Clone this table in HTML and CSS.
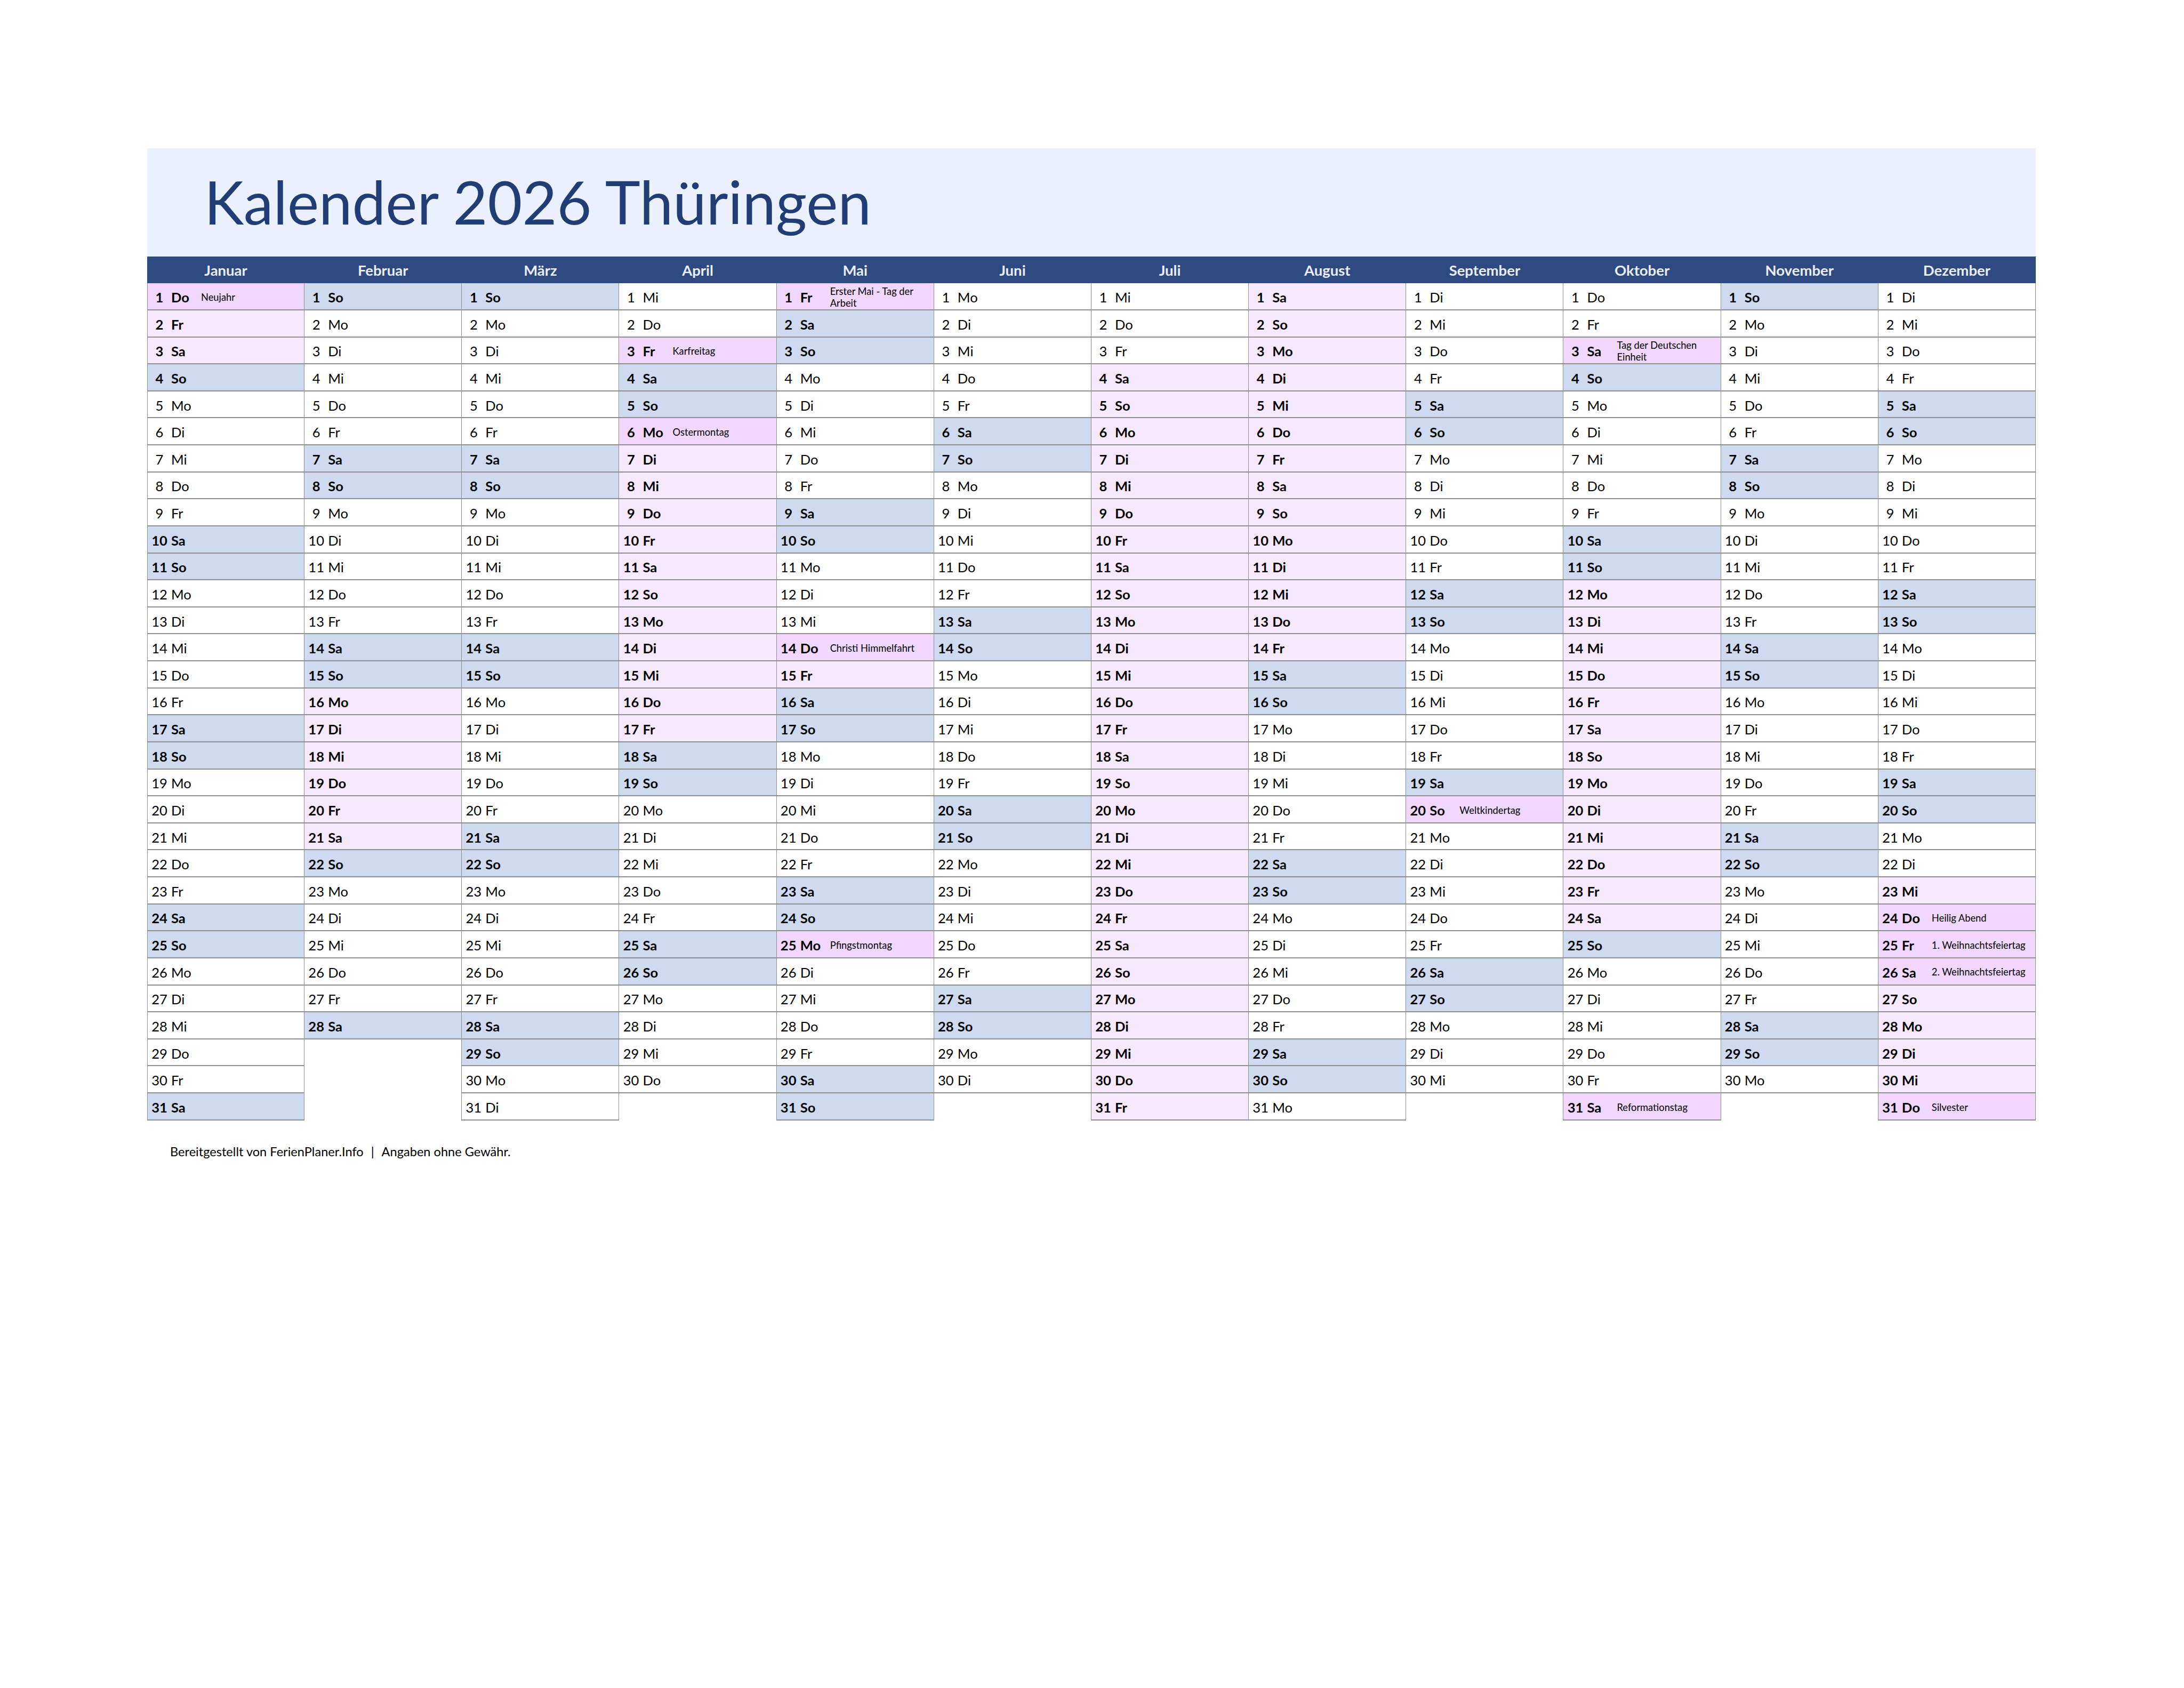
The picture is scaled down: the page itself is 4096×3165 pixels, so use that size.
FILE: index.html
```html
<!DOCTYPE html>
<html lang="de">
<head>
<meta charset="utf-8">
<title>Kalender 2026 Thüringen</title>
<link rel="stylesheet" href="styles.css">
</head>
<body>
<main class="page">
<header class="banner"><h1 class="title">Kalender 2026 Thüringen</h1></header>
<section class="cal">
<div class="month">
<div class="mh">Januar</div>
<div class="c ho"><span class="n">1</span><span class="w">Do</span><span class="h">Neujahr</span></div>
<div class="c fe"><span class="n">2</span><span class="w">Fr</span></div>
<div class="c fe"><span class="n">3</span><span class="w">Sa</span></div>
<div class="c we"><span class="n">4</span><span class="w">So</span></div>
<div class="c"><span class="n">5</span><span class="w">Mo</span></div>
<div class="c"><span class="n">6</span><span class="w">Di</span></div>
<div class="c"><span class="n">7</span><span class="w">Mi</span></div>
<div class="c"><span class="n">8</span><span class="w">Do</span></div>
<div class="c"><span class="n">9</span><span class="w">Fr</span></div>
<div class="c we"><span class="n">10</span><span class="w">Sa</span></div>
<div class="c we"><span class="n">11</span><span class="w">So</span></div>
<div class="c"><span class="n">12</span><span class="w">Mo</span></div>
<div class="c"><span class="n">13</span><span class="w">Di</span></div>
<div class="c"><span class="n">14</span><span class="w">Mi</span></div>
<div class="c"><span class="n">15</span><span class="w">Do</span></div>
<div class="c"><span class="n">16</span><span class="w">Fr</span></div>
<div class="c we"><span class="n">17</span><span class="w">Sa</span></div>
<div class="c we"><span class="n">18</span><span class="w">So</span></div>
<div class="c"><span class="n">19</span><span class="w">Mo</span></div>
<div class="c"><span class="n">20</span><span class="w">Di</span></div>
<div class="c"><span class="n">21</span><span class="w">Mi</span></div>
<div class="c"><span class="n">22</span><span class="w">Do</span></div>
<div class="c"><span class="n">23</span><span class="w">Fr</span></div>
<div class="c we"><span class="n">24</span><span class="w">Sa</span></div>
<div class="c we"><span class="n">25</span><span class="w">So</span></div>
<div class="c"><span class="n">26</span><span class="w">Mo</span></div>
<div class="c"><span class="n">27</span><span class="w">Di</span></div>
<div class="c"><span class="n">28</span><span class="w">Mi</span></div>
<div class="c"><span class="n">29</span><span class="w">Do</span></div>
<div class="c"><span class="n">30</span><span class="w">Fr</span></div>
<div class="c we"><span class="n">31</span><span class="w">Sa</span></div>
</div>
<div class="month">
<div class="mh">Februar</div>
<div class="c we"><span class="n">1</span><span class="w">So</span></div>
<div class="c"><span class="n">2</span><span class="w">Mo</span></div>
<div class="c"><span class="n">3</span><span class="w">Di</span></div>
<div class="c"><span class="n">4</span><span class="w">Mi</span></div>
<div class="c"><span class="n">5</span><span class="w">Do</span></div>
<div class="c"><span class="n">6</span><span class="w">Fr</span></div>
<div class="c we"><span class="n">7</span><span class="w">Sa</span></div>
<div class="c we"><span class="n">8</span><span class="w">So</span></div>
<div class="c"><span class="n">9</span><span class="w">Mo</span></div>
<div class="c"><span class="n">10</span><span class="w">Di</span></div>
<div class="c"><span class="n">11</span><span class="w">Mi</span></div>
<div class="c"><span class="n">12</span><span class="w">Do</span></div>
<div class="c"><span class="n">13</span><span class="w">Fr</span></div>
<div class="c we"><span class="n">14</span><span class="w">Sa</span></div>
<div class="c we"><span class="n">15</span><span class="w">So</span></div>
<div class="c fe"><span class="n">16</span><span class="w">Mo</span></div>
<div class="c fe"><span class="n">17</span><span class="w">Di</span></div>
<div class="c fe"><span class="n">18</span><span class="w">Mi</span></div>
<div class="c fe"><span class="n">19</span><span class="w">Do</span></div>
<div class="c fe"><span class="n">20</span><span class="w">Fr</span></div>
<div class="c fe"><span class="n">21</span><span class="w">Sa</span></div>
<div class="c we"><span class="n">22</span><span class="w">So</span></div>
<div class="c"><span class="n">23</span><span class="w">Mo</span></div>
<div class="c"><span class="n">24</span><span class="w">Di</span></div>
<div class="c"><span class="n">25</span><span class="w">Mi</span></div>
<div class="c"><span class="n">26</span><span class="w">Do</span></div>
<div class="c"><span class="n">27</span><span class="w">Fr</span></div>
<div class="c we"><span class="n">28</span><span class="w">Sa</span></div>
<div class="c e"></div>
<div class="c e"></div>
<div class="c e"></div>
</div>
<div class="month">
<div class="mh">März</div>
<div class="c we"><span class="n">1</span><span class="w">So</span></div>
<div class="c"><span class="n">2</span><span class="w">Mo</span></div>
<div class="c"><span class="n">3</span><span class="w">Di</span></div>
<div class="c"><span class="n">4</span><span class="w">Mi</span></div>
<div class="c"><span class="n">5</span><span class="w">Do</span></div>
<div class="c"><span class="n">6</span><span class="w">Fr</span></div>
<div class="c we"><span class="n">7</span><span class="w">Sa</span></div>
<div class="c we"><span class="n">8</span><span class="w">So</span></div>
<div class="c"><span class="n">9</span><span class="w">Mo</span></div>
<div class="c"><span class="n">10</span><span class="w">Di</span></div>
<div class="c"><span class="n">11</span><span class="w">Mi</span></div>
<div class="c"><span class="n">12</span><span class="w">Do</span></div>
<div class="c"><span class="n">13</span><span class="w">Fr</span></div>
<div class="c we"><span class="n">14</span><span class="w">Sa</span></div>
<div class="c we"><span class="n">15</span><span class="w">So</span></div>
<div class="c"><span class="n">16</span><span class="w">Mo</span></div>
<div class="c"><span class="n">17</span><span class="w">Di</span></div>
<div class="c"><span class="n">18</span><span class="w">Mi</span></div>
<div class="c"><span class="n">19</span><span class="w">Do</span></div>
<div class="c"><span class="n">20</span><span class="w">Fr</span></div>
<div class="c we"><span class="n">21</span><span class="w">Sa</span></div>
<div class="c we"><span class="n">22</span><span class="w">So</span></div>
<div class="c"><span class="n">23</span><span class="w">Mo</span></div>
<div class="c"><span class="n">24</span><span class="w">Di</span></div>
<div class="c"><span class="n">25</span><span class="w">Mi</span></div>
<div class="c"><span class="n">26</span><span class="w">Do</span></div>
<div class="c"><span class="n">27</span><span class="w">Fr</span></div>
<div class="c we"><span class="n">28</span><span class="w">Sa</span></div>
<div class="c we"><span class="n">29</span><span class="w">So</span></div>
<div class="c"><span class="n">30</span><span class="w">Mo</span></div>
<div class="c"><span class="n">31</span><span class="w">Di</span></div>
</div>
<div class="month">
<div class="mh">April</div>
<div class="c"><span class="n">1</span><span class="w">Mi</span></div>
<div class="c"><span class="n">2</span><span class="w">Do</span></div>
<div class="c ho"><span class="n">3</span><span class="w">Fr</span><span class="h">Karfreitag</span></div>
<div class="c we"><span class="n">4</span><span class="w">Sa</span></div>
<div class="c we"><span class="n">5</span><span class="w">So</span></div>
<div class="c ho"><span class="n">6</span><span class="w">Mo</span><span class="h">Ostermontag</span></div>
<div class="c fe"><span class="n">7</span><span class="w">Di</span></div>
<div class="c fe"><span class="n">8</span><span class="w">Mi</span></div>
<div class="c fe"><span class="n">9</span><span class="w">Do</span></div>
<div class="c fe"><span class="n">10</span><span class="w">Fr</span></div>
<div class="c fe"><span class="n">11</span><span class="w">Sa</span></div>
<div class="c fe"><span class="n">12</span><span class="w">So</span></div>
<div class="c fe"><span class="n">13</span><span class="w">Mo</span></div>
<div class="c fe"><span class="n">14</span><span class="w">Di</span></div>
<div class="c fe"><span class="n">15</span><span class="w">Mi</span></div>
<div class="c fe"><span class="n">16</span><span class="w">Do</span></div>
<div class="c fe"><span class="n">17</span><span class="w">Fr</span></div>
<div class="c we"><span class="n">18</span><span class="w">Sa</span></div>
<div class="c we"><span class="n">19</span><span class="w">So</span></div>
<div class="c"><span class="n">20</span><span class="w">Mo</span></div>
<div class="c"><span class="n">21</span><span class="w">Di</span></div>
<div class="c"><span class="n">22</span><span class="w">Mi</span></div>
<div class="c"><span class="n">23</span><span class="w">Do</span></div>
<div class="c"><span class="n">24</span><span class="w">Fr</span></div>
<div class="c we"><span class="n">25</span><span class="w">Sa</span></div>
<div class="c we"><span class="n">26</span><span class="w">So</span></div>
<div class="c"><span class="n">27</span><span class="w">Mo</span></div>
<div class="c"><span class="n">28</span><span class="w">Di</span></div>
<div class="c"><span class="n">29</span><span class="w">Mi</span></div>
<div class="c"><span class="n">30</span><span class="w">Do</span></div>
<div class="c e"></div>
</div>
<div class="month">
<div class="mh">Mai</div>
<div class="c ho"><span class="n">1</span><span class="w">Fr</span><span class="h">Erster Mai - Tag der Arbeit</span></div>
<div class="c we"><span class="n">2</span><span class="w">Sa</span></div>
<div class="c we"><span class="n">3</span><span class="w">So</span></div>
<div class="c"><span class="n">4</span><span class="w">Mo</span></div>
<div class="c"><span class="n">5</span><span class="w">Di</span></div>
<div class="c"><span class="n">6</span><span class="w">Mi</span></div>
<div class="c"><span class="n">7</span><span class="w">Do</span></div>
<div class="c"><span class="n">8</span><span class="w">Fr</span></div>
<div class="c we"><span class="n">9</span><span class="w">Sa</span></div>
<div class="c we"><span class="n">10</span><span class="w">So</span></div>
<div class="c"><span class="n">11</span><span class="w">Mo</span></div>
<div class="c"><span class="n">12</span><span class="w">Di</span></div>
<div class="c"><span class="n">13</span><span class="w">Mi</span></div>
<div class="c ho"><span class="n">14</span><span class="w">Do</span><span class="h">Christi Himmelfahrt</span></div>
<div class="c fe"><span class="n">15</span><span class="w">Fr</span></div>
<div class="c we"><span class="n">16</span><span class="w">Sa</span></div>
<div class="c we"><span class="n">17</span><span class="w">So</span></div>
<div class="c"><span class="n">18</span><span class="w">Mo</span></div>
<div class="c"><span class="n">19</span><span class="w">Di</span></div>
<div class="c"><span class="n">20</span><span class="w">Mi</span></div>
<div class="c"><span class="n">21</span><span class="w">Do</span></div>
<div class="c"><span class="n">22</span><span class="w">Fr</span></div>
<div class="c we"><span class="n">23</span><span class="w">Sa</span></div>
<div class="c we"><span class="n">24</span><span class="w">So</span></div>
<div class="c ho"><span class="n">25</span><span class="w">Mo</span><span class="h">Pfingstmontag</span></div>
<div class="c"><span class="n">26</span><span class="w">Di</span></div>
<div class="c"><span class="n">27</span><span class="w">Mi</span></div>
<div class="c"><span class="n">28</span><span class="w">Do</span></div>
<div class="c"><span class="n">29</span><span class="w">Fr</span></div>
<div class="c we"><span class="n">30</span><span class="w">Sa</span></div>
<div class="c we"><span class="n">31</span><span class="w">So</span></div>
</div>
<div class="month">
<div class="mh">Juni</div>
<div class="c"><span class="n">1</span><span class="w">Mo</span></div>
<div class="c"><span class="n">2</span><span class="w">Di</span></div>
<div class="c"><span class="n">3</span><span class="w">Mi</span></div>
<div class="c"><span class="n">4</span><span class="w">Do</span></div>
<div class="c"><span class="n">5</span><span class="w">Fr</span></div>
<div class="c we"><span class="n">6</span><span class="w">Sa</span></div>
<div class="c we"><span class="n">7</span><span class="w">So</span></div>
<div class="c"><span class="n">8</span><span class="w">Mo</span></div>
<div class="c"><span class="n">9</span><span class="w">Di</span></div>
<div class="c"><span class="n">10</span><span class="w">Mi</span></div>
<div class="c"><span class="n">11</span><span class="w">Do</span></div>
<div class="c"><span class="n">12</span><span class="w">Fr</span></div>
<div class="c we"><span class="n">13</span><span class="w">Sa</span></div>
<div class="c we"><span class="n">14</span><span class="w">So</span></div>
<div class="c"><span class="n">15</span><span class="w">Mo</span></div>
<div class="c"><span class="n">16</span><span class="w">Di</span></div>
<div class="c"><span class="n">17</span><span class="w">Mi</span></div>
<div class="c"><span class="n">18</span><span class="w">Do</span></div>
<div class="c"><span class="n">19</span><span class="w">Fr</span></div>
<div class="c we"><span class="n">20</span><span class="w">Sa</span></div>
<div class="c we"><span class="n">21</span><span class="w">So</span></div>
<div class="c"><span class="n">22</span><span class="w">Mo</span></div>
<div class="c"><span class="n">23</span><span class="w">Di</span></div>
<div class="c"><span class="n">24</span><span class="w">Mi</span></div>
<div class="c"><span class="n">25</span><span class="w">Do</span></div>
<div class="c"><span class="n">26</span><span class="w">Fr</span></div>
<div class="c we"><span class="n">27</span><span class="w">Sa</span></div>
<div class="c we"><span class="n">28</span><span class="w">So</span></div>
<div class="c"><span class="n">29</span><span class="w">Mo</span></div>
<div class="c"><span class="n">30</span><span class="w">Di</span></div>
<div class="c e"></div>
</div>
<div class="month">
<div class="mh">Juli</div>
<div class="c"><span class="n">1</span><span class="w">Mi</span></div>
<div class="c"><span class="n">2</span><span class="w">Do</span></div>
<div class="c"><span class="n">3</span><span class="w">Fr</span></div>
<div class="c fe"><span class="n">4</span><span class="w">Sa</span></div>
<div class="c fe"><span class="n">5</span><span class="w">So</span></div>
<div class="c fe"><span class="n">6</span><span class="w">Mo</span></div>
<div class="c fe"><span class="n">7</span><span class="w">Di</span></div>
<div class="c fe"><span class="n">8</span><span class="w">Mi</span></div>
<div class="c fe"><span class="n">9</span><span class="w">Do</span></div>
<div class="c fe"><span class="n">10</span><span class="w">Fr</span></div>
<div class="c fe"><span class="n">11</span><span class="w">Sa</span></div>
<div class="c fe"><span class="n">12</span><span class="w">So</span></div>
<div class="c fe"><span class="n">13</span><span class="w">Mo</span></div>
<div class="c fe"><span class="n">14</span><span class="w">Di</span></div>
<div class="c fe"><span class="n">15</span><span class="w">Mi</span></div>
<div class="c fe"><span class="n">16</span><span class="w">Do</span></div>
<div class="c fe"><span class="n">17</span><span class="w">Fr</span></div>
<div class="c fe"><span class="n">18</span><span class="w">Sa</span></div>
<div class="c fe"><span class="n">19</span><span class="w">So</span></div>
<div class="c fe"><span class="n">20</span><span class="w">Mo</span></div>
<div class="c fe"><span class="n">21</span><span class="w">Di</span></div>
<div class="c fe"><span class="n">22</span><span class="w">Mi</span></div>
<div class="c fe"><span class="n">23</span><span class="w">Do</span></div>
<div class="c fe"><span class="n">24</span><span class="w">Fr</span></div>
<div class="c fe"><span class="n">25</span><span class="w">Sa</span></div>
<div class="c fe"><span class="n">26</span><span class="w">So</span></div>
<div class="c fe"><span class="n">27</span><span class="w">Mo</span></div>
<div class="c fe"><span class="n">28</span><span class="w">Di</span></div>
<div class="c fe"><span class="n">29</span><span class="w">Mi</span></div>
<div class="c fe"><span class="n">30</span><span class="w">Do</span></div>
<div class="c fe"><span class="n">31</span><span class="w">Fr</span></div>
</div>
<div class="month">
<div class="mh">August</div>
<div class="c fe"><span class="n">1</span><span class="w">Sa</span></div>
<div class="c fe"><span class="n">2</span><span class="w">So</span></div>
<div class="c fe"><span class="n">3</span><span class="w">Mo</span></div>
<div class="c fe"><span class="n">4</span><span class="w">Di</span></div>
<div class="c fe"><span class="n">5</span><span class="w">Mi</span></div>
<div class="c fe"><span class="n">6</span><span class="w">Do</span></div>
<div class="c fe"><span class="n">7</span><span class="w">Fr</span></div>
<div class="c fe"><span class="n">8</span><span class="w">Sa</span></div>
<div class="c fe"><span class="n">9</span><span class="w">So</span></div>
<div class="c fe"><span class="n">10</span><span class="w">Mo</span></div>
<div class="c fe"><span class="n">11</span><span class="w">Di</span></div>
<div class="c fe"><span class="n">12</span><span class="w">Mi</span></div>
<div class="c fe"><span class="n">13</span><span class="w">Do</span></div>
<div class="c fe"><span class="n">14</span><span class="w">Fr</span></div>
<div class="c we"><span class="n">15</span><span class="w">Sa</span></div>
<div class="c we"><span class="n">16</span><span class="w">So</span></div>
<div class="c"><span class="n">17</span><span class="w">Mo</span></div>
<div class="c"><span class="n">18</span><span class="w">Di</span></div>
<div class="c"><span class="n">19</span><span class="w">Mi</span></div>
<div class="c"><span class="n">20</span><span class="w">Do</span></div>
<div class="c"><span class="n">21</span><span class="w">Fr</span></div>
<div class="c we"><span class="n">22</span><span class="w">Sa</span></div>
<div class="c we"><span class="n">23</span><span class="w">So</span></div>
<div class="c"><span class="n">24</span><span class="w">Mo</span></div>
<div class="c"><span class="n">25</span><span class="w">Di</span></div>
<div class="c"><span class="n">26</span><span class="w">Mi</span></div>
<div class="c"><span class="n">27</span><span class="w">Do</span></div>
<div class="c"><span class="n">28</span><span class="w">Fr</span></div>
<div class="c we"><span class="n">29</span><span class="w">Sa</span></div>
<div class="c we"><span class="n">30</span><span class="w">So</span></div>
<div class="c"><span class="n">31</span><span class="w">Mo</span></div>
</div>
<div class="month">
<div class="mh">September</div>
<div class="c"><span class="n">1</span><span class="w">Di</span></div>
<div class="c"><span class="n">2</span><span class="w">Mi</span></div>
<div class="c"><span class="n">3</span><span class="w">Do</span></div>
<div class="c"><span class="n">4</span><span class="w">Fr</span></div>
<div class="c we"><span class="n">5</span><span class="w">Sa</span></div>
<div class="c we"><span class="n">6</span><span class="w">So</span></div>
<div class="c"><span class="n">7</span><span class="w">Mo</span></div>
<div class="c"><span class="n">8</span><span class="w">Di</span></div>
<div class="c"><span class="n">9</span><span class="w">Mi</span></div>
<div class="c"><span class="n">10</span><span class="w">Do</span></div>
<div class="c"><span class="n">11</span><span class="w">Fr</span></div>
<div class="c we"><span class="n">12</span><span class="w">Sa</span></div>
<div class="c we"><span class="n">13</span><span class="w">So</span></div>
<div class="c"><span class="n">14</span><span class="w">Mo</span></div>
<div class="c"><span class="n">15</span><span class="w">Di</span></div>
<div class="c"><span class="n">16</span><span class="w">Mi</span></div>
<div class="c"><span class="n">17</span><span class="w">Do</span></div>
<div class="c"><span class="n">18</span><span class="w">Fr</span></div>
<div class="c we"><span class="n">19</span><span class="w">Sa</span></div>
<div class="c ho"><span class="n">20</span><span class="w">So</span><span class="h">Weltkindertag</span></div>
<div class="c"><span class="n">21</span><span class="w">Mo</span></div>
<div class="c"><span class="n">22</span><span class="w">Di</span></div>
<div class="c"><span class="n">23</span><span class="w">Mi</span></div>
<div class="c"><span class="n">24</span><span class="w">Do</span></div>
<div class="c"><span class="n">25</span><span class="w">Fr</span></div>
<div class="c we"><span class="n">26</span><span class="w">Sa</span></div>
<div class="c we"><span class="n">27</span><span class="w">So</span></div>
<div class="c"><span class="n">28</span><span class="w">Mo</span></div>
<div class="c"><span class="n">29</span><span class="w">Di</span></div>
<div class="c"><span class="n">30</span><span class="w">Mi</span></div>
<div class="c e"></div>
</div>
<div class="month">
<div class="mh">Oktober</div>
<div class="c"><span class="n">1</span><span class="w">Do</span></div>
<div class="c"><span class="n">2</span><span class="w">Fr</span></div>
<div class="c ho"><span class="n">3</span><span class="w">Sa</span><span class="h">Tag der Deutschen Einheit</span></div>
<div class="c we"><span class="n">4</span><span class="w">So</span></div>
<div class="c"><span class="n">5</span><span class="w">Mo</span></div>
<div class="c"><span class="n">6</span><span class="w">Di</span></div>
<div class="c"><span class="n">7</span><span class="w">Mi</span></div>
<div class="c"><span class="n">8</span><span class="w">Do</span></div>
<div class="c"><span class="n">9</span><span class="w">Fr</span></div>
<div class="c we"><span class="n">10</span><span class="w">Sa</span></div>
<div class="c we"><span class="n">11</span><span class="w">So</span></div>
<div class="c fe"><span class="n">12</span><span class="w">Mo</span></div>
<div class="c fe"><span class="n">13</span><span class="w">Di</span></div>
<div class="c fe"><span class="n">14</span><span class="w">Mi</span></div>
<div class="c fe"><span class="n">15</span><span class="w">Do</span></div>
<div class="c fe"><span class="n">16</span><span class="w">Fr</span></div>
<div class="c fe"><span class="n">17</span><span class="w">Sa</span></div>
<div class="c fe"><span class="n">18</span><span class="w">So</span></div>
<div class="c fe"><span class="n">19</span><span class="w">Mo</span></div>
<div class="c fe"><span class="n">20</span><span class="w">Di</span></div>
<div class="c fe"><span class="n">21</span><span class="w">Mi</span></div>
<div class="c fe"><span class="n">22</span><span class="w">Do</span></div>
<div class="c fe"><span class="n">23</span><span class="w">Fr</span></div>
<div class="c fe"><span class="n">24</span><span class="w">Sa</span></div>
<div class="c we"><span class="n">25</span><span class="w">So</span></div>
<div class="c"><span class="n">26</span><span class="w">Mo</span></div>
<div class="c"><span class="n">27</span><span class="w">Di</span></div>
<div class="c"><span class="n">28</span><span class="w">Mi</span></div>
<div class="c"><span class="n">29</span><span class="w">Do</span></div>
<div class="c"><span class="n">30</span><span class="w">Fr</span></div>
<div class="c ho"><span class="n">31</span><span class="w">Sa</span><span class="h">Reformationstag</span></div>
</div>
<div class="month">
<div class="mh">November</div>
<div class="c we"><span class="n">1</span><span class="w">So</span></div>
<div class="c"><span class="n">2</span><span class="w">Mo</span></div>
<div class="c"><span class="n">3</span><span class="w">Di</span></div>
<div class="c"><span class="n">4</span><span class="w">Mi</span></div>
<div class="c"><span class="n">5</span><span class="w">Do</span></div>
<div class="c"><span class="n">6</span><span class="w">Fr</span></div>
<div class="c we"><span class="n">7</span><span class="w">Sa</span></div>
<div class="c we"><span class="n">8</span><span class="w">So</span></div>
<div class="c"><span class="n">9</span><span class="w">Mo</span></div>
<div class="c"><span class="n">10</span><span class="w">Di</span></div>
<div class="c"><span class="n">11</span><span class="w">Mi</span></div>
<div class="c"><span class="n">12</span><span class="w">Do</span></div>
<div class="c"><span class="n">13</span><span class="w">Fr</span></div>
<div class="c we"><span class="n">14</span><span class="w">Sa</span></div>
<div class="c we"><span class="n">15</span><span class="w">So</span></div>
<div class="c"><span class="n">16</span><span class="w">Mo</span></div>
<div class="c"><span class="n">17</span><span class="w">Di</span></div>
<div class="c"><span class="n">18</span><span class="w">Mi</span></div>
<div class="c"><span class="n">19</span><span class="w">Do</span></div>
<div class="c"><span class="n">20</span><span class="w">Fr</span></div>
<div class="c we"><span class="n">21</span><span class="w">Sa</span></div>
<div class="c we"><span class="n">22</span><span class="w">So</span></div>
<div class="c"><span class="n">23</span><span class="w">Mo</span></div>
<div class="c"><span class="n">24</span><span class="w">Di</span></div>
<div class="c"><span class="n">25</span><span class="w">Mi</span></div>
<div class="c"><span class="n">26</span><span class="w">Do</span></div>
<div class="c"><span class="n">27</span><span class="w">Fr</span></div>
<div class="c we"><span class="n">28</span><span class="w">Sa</span></div>
<div class="c we"><span class="n">29</span><span class="w">So</span></div>
<div class="c"><span class="n">30</span><span class="w">Mo</span></div>
<div class="c e"></div>
</div>
<div class="month">
<div class="mh">Dezember</div>
<div class="c"><span class="n">1</span><span class="w">Di</span></div>
<div class="c"><span class="n">2</span><span class="w">Mi</span></div>
<div class="c"><span class="n">3</span><span class="w">Do</span></div>
<div class="c"><span class="n">4</span><span class="w">Fr</span></div>
<div class="c we"><span class="n">5</span><span class="w">Sa</span></div>
<div class="c we"><span class="n">6</span><span class="w">So</span></div>
<div class="c"><span class="n">7</span><span class="w">Mo</span></div>
<div class="c"><span class="n">8</span><span class="w">Di</span></div>
<div class="c"><span class="n">9</span><span class="w">Mi</span></div>
<div class="c"><span class="n">10</span><span class="w">Do</span></div>
<div class="c"><span class="n">11</span><span class="w">Fr</span></div>
<div class="c we"><span class="n">12</span><span class="w">Sa</span></div>
<div class="c we"><span class="n">13</span><span class="w">So</span></div>
<div class="c"><span class="n">14</span><span class="w">Mo</span></div>
<div class="c"><span class="n">15</span><span class="w">Di</span></div>
<div class="c"><span class="n">16</span><span class="w">Mi</span></div>
<div class="c"><span class="n">17</span><span class="w">Do</span></div>
<div class="c"><span class="n">18</span><span class="w">Fr</span></div>
<div class="c we"><span class="n">19</span><span class="w">Sa</span></div>
<div class="c we"><span class="n">20</span><span class="w">So</span></div>
<div class="c"><span class="n">21</span><span class="w">Mo</span></div>
<div class="c"><span class="n">22</span><span class="w">Di</span></div>
<div class="c fe"><span class="n">23</span><span class="w">Mi</span></div>
<div class="c ho"><span class="n">24</span><span class="w">Do</span><span class="h">Heilig Abend</span></div>
<div class="c ho"><span class="n">25</span><span class="w">Fr</span><span class="h">1. Weihnachtsfeiertag</span></div>
<div class="c ho"><span class="n">26</span><span class="w">Sa</span><span class="h">2. Weihnachtsfeiertag</span></div>
<div class="c fe"><span class="n">27</span><span class="w">So</span></div>
<div class="c fe"><span class="n">28</span><span class="w">Mo</span></div>
<div class="c fe"><span class="n">29</span><span class="w">Di</span></div>
<div class="c fe"><span class="n">30</span><span class="w">Mi</span></div>
<div class="c ho"><span class="n">31</span><span class="w">Do</span><span class="h">Silvester</span></div>
</div>
</section>
<p class="foot">Bereitgestellt von FerienPlaner.Info<span class="sep">|</span>Angaben ohne Gewähr.</p>
</main>
</body>
</html>
```

FILE: styles.css
```css
* {
  box-sizing: border-box;
  margin: 0;
  padding: 0;
}

body {
  background: #ffffff;
  color: #000000;
  font-family: Lato, "Noto Sans", "Liberation Sans", sans-serif;
}

.page {
  padding: 278px 0 0 276px;
  width: 3830px;
}

.banner {
  width: 3542px;
  height: 203px;
  background: #eaf0fd;
  padding: 44px 0 0 107px;
}

.title {
  font-weight: 400;
  font-size: 112px;
  line-height: 1;
  color: #203d76;
}

.cal {
  display: grid;
  grid-template-columns: repeat(12, 1fr);
  width: 3542px;
}

.month {
  display: grid;
  grid-template-rows: 50.3px repeat(31, 50.63px);
  min-width: 0;
}

.month + .month {
  margin-left: -1px;
}

.mh {
  background: #2e4a80;
  color: #e9eefa;
  font-weight: 700;
  font-size: 27.5px;
  display: flex;
  align-items: center;
  justify-content: center;
}

.c {
  display: flex;
  align-items: center;
  border-style: solid;
  border-color: #8f8f8f;
  border-width: 0 1px 2px 1px;
  padding-top: 3px;
  font-size: 25.6px;
  background: #ffffff;
  min-width: 0;
}

.c.e {
  border: 0;
  background: transparent;
}

.we {
  background: #cfdaf0;
  font-weight: 700;
}

.fe {
  background: #f6e9fd;
  font-weight: 700;
}

.ho {
  background: #f1d7fd;
  font-weight: 700;
}

.n {
  flex: none;
  width: 44px;
  text-align: center;
}

.w {
  flex: none;
  width: 56px;
}

.h {
  flex: 1;
  min-width: 0;
  font-size: 18.3px;
  line-height: 1.23;
  font-weight: 400;
  padding-right: 8px;
}

.foot {
  margin-top: 44px;
  padding-left: 43px;
  font-size: 23.6px;
  line-height: 1.2;
}

.sep {
  margin: 0 14px;
}
```
